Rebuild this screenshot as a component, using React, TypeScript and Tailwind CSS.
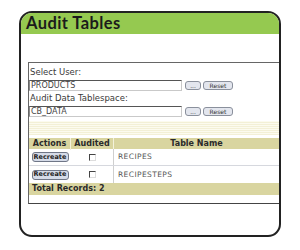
import React from "react";

const rows = ["RECIPES", "RECIPESTEPS"];

function SmallButton({ label, w }: { label: string; w: string }) {
  return (
    <div
      className={`${w} h-[9px] rounded-[3px] border border-[#8a909c] bg-[#e3e6ee] flex items-center justify-center text-[6px] leading-none text-[#333] font-['DejaVu_Sans',sans-serif]`}
    >
      {label}
    </div>
  );
}

function Field({ label, value }: { label: string; value: string }) {
  return (
    <>
      <div className="text-[8.5px] leading-[11px] text-[#3a3a3a] pl-[1px]">{label}</div>
      <div className="flex items-center mt-[2px]">
        <div className="w-[153px] h-[11px] border border-[#c9c9c9] border-t-[#555] border-l-[#888] bg-white flex items-center pl-[1px] text-[8px] leading-none text-[#444]">
          {value}
        </div>
        <div className="ml-[3px] flex gap-[2px]">
          <SmallButton label="..." w="w-[16px]" />
          <SmallButton label="Reset" w="w-[30px]" />
        </div>
      </div>
    </>
  );
}

export default function App() {
  return (
    <div className="w-[300px] h-[250px] bg-white pt-[11px] pl-[19px] font-['DejaVu_Sans',sans-serif]">
      <div className="w-[262px] h-[226px] border-2 border-[#222] rounded-[13px] overflow-hidden flex flex-col bg-white">
        {/* header */}
        <div className="h-[21px] bg-[#95c950] flex items-center pl-[5px]">
          <span className="font-['Lato',sans-serif] font-bold text-[16.5px] leading-none tracking-[0.4px] text-[#1b1b1b]">
            Audit Tables
          </span>
        </div>

        {/* panel */}
        <div className="mt-[28px] ml-[7px] border-t border-l border-[#666] border-b border-b-[#444] flex flex-col pt-[4px]">
          <Field label="Select User:" value="PRODUCTS" />
          <div className="h-[2px]" />
          <Field label="Audit Data Tablespace:" value="CB_DATA" />

          <div className="mt-[4px] h-[14px] bg-[repeating-linear-gradient(0deg,#f3f0d6_0px,#f3f0d6_1px,#fcfbef_1px,#fcfbef_2px)]" />

          <div className="mt-[3px] text-[8px] text-[#2a2a2a]">
            <div className="flex h-[11px] bg-[#d9d5a0] font-bold items-center">
              <div className="w-[42px] text-center border-r border-[#f4f2dc]">Actions</div>
              <div className="w-[43px] text-center border-r border-[#f4f2dc]">Audited</div>
              <div className="flex-1 text-center">Table Name</div>
            </div>
            {rows.map((r, i) => (
              <div
                key={r}
                className={`flex items-center bg-white h-[17px] ${i === 0 ? "border-b border-[#d6d8de]" : ""}`}
              >
                <div className="w-[42px] flex justify-center">
                  <div className="w-[37px] h-[10px] rounded-[3px] border border-[#6f7687] bg-[#d5dbe8] flex items-center justify-center text-[6.5px] leading-none text-[#222] font-bold">
                    Recreate
                  </div>
                </div>
                <div className="w-[43px] flex justify-center self-stretch items-center border-r border-[#cfcfcf]">
                  <div className="w-[7px] h-[7px] border border-t-[#444] border-l-[#444] border-r-[#ddd] border-b-[#ddd] bg-white" />
                </div>
                <div className="flex-1 pl-[4px] text-[7.5px] text-[#555] tracking-[0.4px]">{r}</div>
              </div>
            ))}
            <div className="h-[12px] bg-[#d9d5a0] font-bold flex items-center pl-[3px]">
              Total Records: 2
            </div>
            <div className="h-[8px] bg-white" />
          </div>
        </div>
      </div>
    </div>
  );
}
